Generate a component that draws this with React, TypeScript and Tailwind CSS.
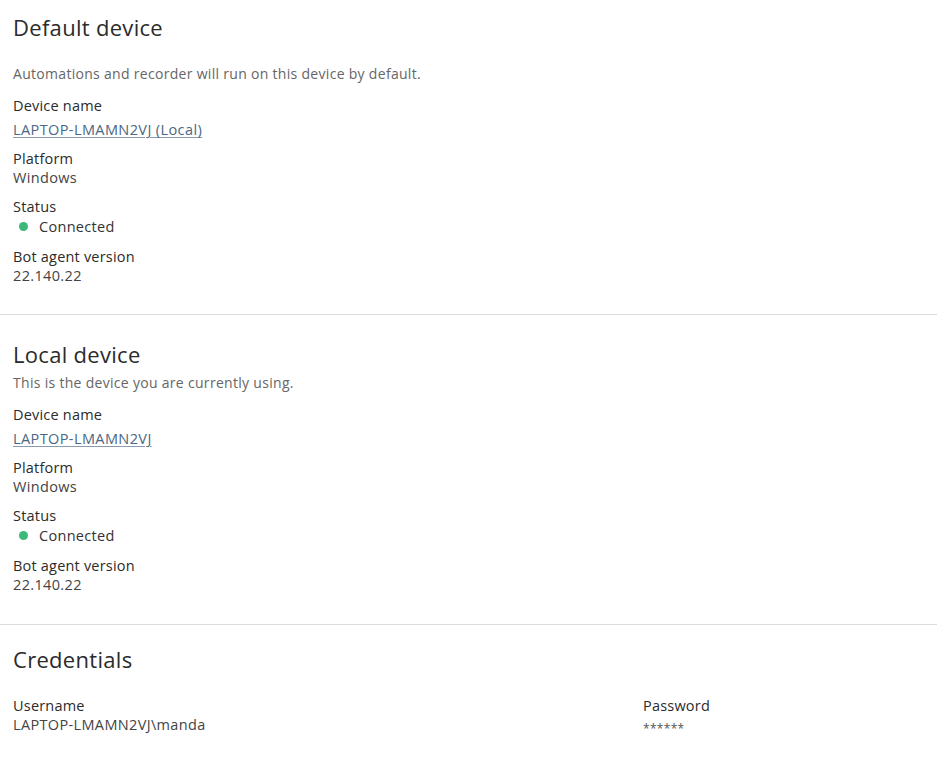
import React from 'react';

interface Field {
  label: string;
  value: string;
  link?: boolean;
  status?: boolean;
}

const FieldRow: React.FC<{ field: Field }> = ({ field }) => (
  <div className="flex flex-col">
    <span className="text-[14.5px] leading-[19px] tracking-[0.2px] text-[#2b2b2b]">{field.label}</span>
    {field.link ? (
      <a href="#" className="mt-[5px] w-fit text-[14.5px] leading-[19px] tracking-[0.4px] text-[#4a6785] underline underline-offset-2 decoration-[#8a9bb0]">
        {field.value}
      </a>
    ) : field.status ? (
      <span className="flex items-center text-[14.5px] leading-[21px] tracking-[0.3px] text-[#333]">
        <span className="ml-[6px] mr-[11px] h-[9px] w-[9px] rounded-full bg-[#3cb878]" />
        {field.value}
      </span>
    ) : (
      <span className="text-[14.5px] leading-[19px] tracking-[0.35px] text-[#444]">{field.value}</span>
    )}
  </div>
);

const deviceFields = (name: string): Field[] => [
  { label: 'Device name', value: name, link: true },
  { label: 'Platform', value: 'Windows' },
  { label: 'Status', value: 'Connected', status: true },
  { label: 'Bot agent version', value: '22.140.22' },
];

const App: React.FC = () => {
  return (
    <div className="min-h-screen bg-white font-['Open_Sans','Lato',sans-serif]">
      <section className="px-[13px] pt-[13px] pb-[29px]">
        <h2 className="text-[22px] leading-[28px] tracking-[0.3px] text-[#2b2b2b]">Default device</h2>
        <p className="mt-[23px] text-[14px] leading-[20px] tracking-[0.3px] text-[#666]">
          Automations and recorder will run on this device by default.
        </p>
        <div className="mt-[12px] flex flex-col gap-[10px]">
          {deviceFields('LAPTOP-LMAMN2VJ (Local)').map((f) => (
            <FieldRow key={f.label} field={f} />
          ))}
        </div>
      </section>

      <div className="h-px bg-[#dcdcdc]" />

      <section className="px-[13px] pt-[25px] pb-[30px]">
        <h2 className="text-[22px] leading-[28px] tracking-[0.3px] text-[#2b2b2b]">Local device</h2>
        <p className="mt-[5px] text-[14px] leading-[20px] tracking-[0.3px] text-[#666]">
          This is the device you are currently using.
        </p>
        <div className="mt-[12px] flex flex-col gap-[10px]">
          {deviceFields('LAPTOP-LMAMN2VJ').map((f) => (
            <FieldRow key={f.label} field={f} />
          ))}
        </div>
      </section>

      <div className="h-px bg-[#dcdcdc]" />

      <section className="px-[13px] pt-[20px] pb-[30px]">
        <h2 className="text-[22px] leading-[28px] tracking-[0.3px] text-[#2b2b2b]">Credentials</h2>
        <div className="mt-[23px] grid grid-cols-[630px_1fr]">
          <div className="flex flex-col">
            <span className="text-[14.5px] leading-[19px] tracking-[0.2px] text-[#2b2b2b]">Username</span>
            <span className="text-[14.5px] leading-[19px] tracking-[0.35px] text-[#444]">LAPTOP-LMAMN2VJ\manda</span>
          </div>
          <div className="flex flex-col">
            <span className="text-[14.5px] leading-[19px] tracking-[0.2px] text-[#2b2b2b]">Password</span>
            <span className="mt-[3px] text-[12px] leading-[22px] tracking-[0.3px] text-[#555]">******</span>
          </div>
        </div>
      </section>
    </div>
  );
};

export default App;
